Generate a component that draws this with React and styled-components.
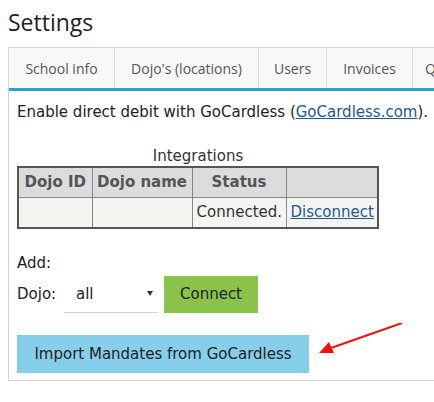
import styled, { createGlobalStyle } from "styled-components";

const GlobalStyle = createGlobalStyle`
  body {
    margin: 0;
    padding: 8px;
    overflow: hidden;
    background: #fff;
    font-family: "DejaVu Sans", Verdana, sans-serif;
    font-size: 15px;
    color: #222;
  }
`;

const tabs = [
  { label: "School info", w: 105 },
  { label: "Dojo's (locations)", w: 143 },
  { label: "Users", w: 67 },
  { label: "Invoices", w: 85 },
  { label: "Quotas" },
];

const Title = styled.h1`
  margin: 0 0 11px;
  font-family: "Open Sans", "Segoe UI", sans-serif;
  font-weight: 400;
  font-size: 23px;
  line-height: 28px;
  color: #222;
`;

const Panel = styled.div`
  width: 470px;
  border: 1px solid #d4d4d4;
  border-right: none;
  padding-bottom: 7px;
`;

const TabBar = styled.div`
  display: flex;
  height: 40px;
  border-bottom: 3px solid #2a9fd8;
  background: #f8f8f8;
`;

const Tab = styled.div`
  display: flex;
  align-items: center;
  justify-content: center;
  width: ${(p) => (p.$w ? `${p.$w}px` : "auto")};
  padding: 0 ${(p) => (p.$w ? 0 : 12)}px;
  flex: none;
  border-right: 1px solid #dedede;
  font-family: "Open Sans", "Segoe UI", sans-serif;
  font-size: 14px;
  color: #555;
  white-space: nowrap;
`;

const Body = styled.div`
  padding: 11px 8px 0;
`;

const Intro = styled.p`
  margin: 0 0 24px;
  line-height: 20px;
  white-space: nowrap;
`;

const Link = styled.a`
  color: #1d5a8a;
  text-decoration: underline;
`;

const Table = styled.table`
  border-collapse: collapse;
  border: 2px solid #555;
  width: 360px;
  table-layout: fixed;
`;

const Caption = styled.caption`
  line-height: 20px;
  color: #333;
`;

const Th = styled.th`
  box-sizing: border-box;
  background: #dcdcdc;
  color: #555;
  font-weight: bold;
  height: 30px;
  padding: 0 2px;
  border: 1px solid #888;
  white-space: nowrap;
  width: ${(p) => p.$w}px;
`;

const Td = styled.td`
  background: #f5f4f1;
  height: 29px;
  padding: 0 4px;
  border: 1px solid #888;
  white-space: nowrap;
  color: #333;
`;

const AddLabel = styled.div`
  margin-top: 24px;
  line-height: 20px;
`;

const AddRow = styled.div`
  display: flex;
  align-items: center;
  margin-top: 3px;
`;

const Label = styled.span`
  width: 47px;
  flex: none;
`;

const Select = styled.div`
  position: relative;
  width: 82px;
  height: 35px;
  padding-left: 12px;
  display: flex;
  align-items: center;
  border-bottom: 1px solid #cfcfcf;
  margin-top: 1px;
  &::after {
    content: "";
    position: absolute;
    right: 5px;
    top: 14px;
    border-left: 3px solid transparent;
    border-right: 3px solid transparent;
    border-top: 5px solid #333;
  }
`;

const Button = styled.button`
  border: none;
  background: ${(p) => p.$bg};
  width: ${(p) => p.$w}px;
  height: ${(p) => p.$h}px;
  padding: 0;
  font-family: "DejaVu Sans", Verdana, sans-serif;
  font-size: 15px;
  color: #222;
  cursor: pointer;
`;

const ConnectButton = styled(Button)`
  margin-left: 6px;
`;

const ImportRow = styled.div`
  position: relative;
  margin-top: 22px;
`;

const Arrow = styled.svg`
  position: absolute;
  left: 300px;
  top: -12px;
`;

export default function App() {
  return (
    <>
      <GlobalStyle />
      <Title>Settings</Title>
      <Panel>
        <TabBar>
          {tabs.map((t) => (
            <Tab key={t.label} $w={t.w}>
              {t.label}
            </Tab>
          ))}
        </TabBar>
        <Body>
          <Intro>
            Enable direct debit with GoCardless (<Link href="#">GoCardless.com</Link>).
          </Intro>
          <Table>
            <Caption>Integrations</Caption>
            <thead>
              <tr>
                <Th $w={74}>Dojo ID</Th>
                <Th $w={100}>Dojo name</Th>
                <Th $w={94}>Status</Th>
                <Th $w={92}></Th>
              </tr>
            </thead>
            <tbody>
              <tr>
                <Td></Td>
                <Td></Td>
                <Td>Connected.</Td>
                <Td>
                  <Link href="#">Disconnect</Link>
                </Td>
              </tr>
            </tbody>
          </Table>
          <AddLabel>Add:</AddLabel>
          <AddRow>
            <Label>Dojo:</Label>
            <Select>all</Select>
            <ConnectButton $bg="#8bc34a" $w={94} $h={37}>
              Connect
            </ConnectButton>
          </AddRow>
          <ImportRow>
            <Button $bg="#87ceeb" $w={292} $h={38}>
              Import Mandates from GoCardless
            </Button>
            <Arrow width="90" height="40" viewBox="0 0 90 40">
              <line x1="85" y1="0" x2="14" y2="25" stroke="#f01010" strokeWidth="2" />
              <polygon points="2,30 12,19 17,30" fill="#f01010" />
            </Arrow>
          </ImportRow>
        </Body>
      </Panel>
    </>
  );
}
